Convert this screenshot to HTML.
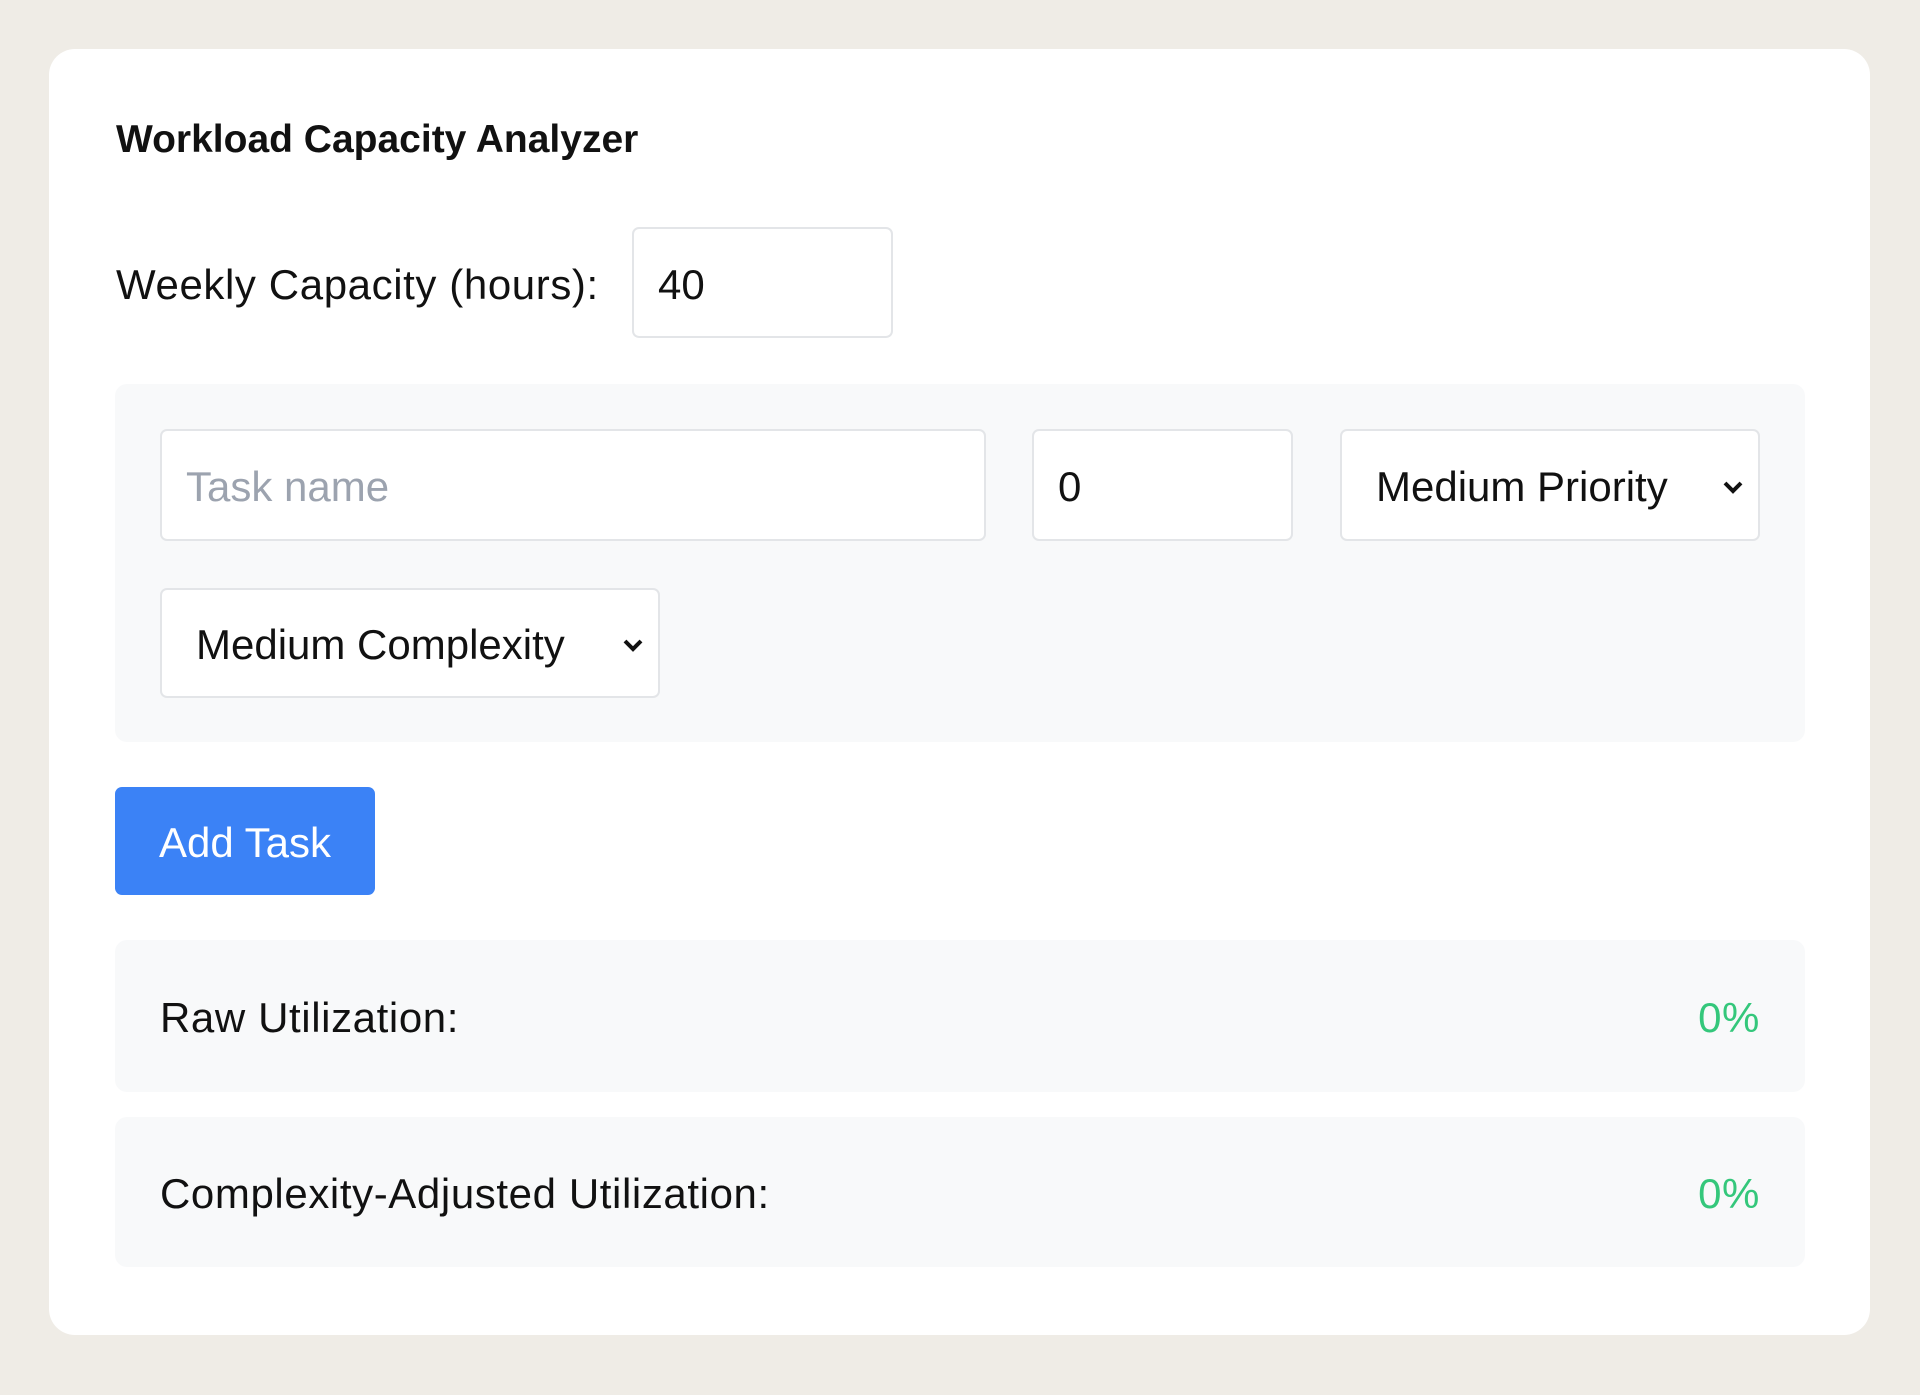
<!DOCTYPE html>
<html><head><meta charset="utf-8"><style>
*{box-sizing:border-box;margin:0;padding:0}
body{width:1920px;height:1395px;background:#efece6;font-family:"Liberation Sans",sans-serif;position:relative;overflow:hidden;color:#111}
.card{position:absolute;left:49px;top:49px;width:1821px;height:1286px;background:#fff;border-radius:26px}
.a{position:absolute}
.t{left:116px;top:115px;font-size:39px;font-weight:bold;line-height:50px;color:#111}
.lbl{left:116px;top:260px;font-size:42px;line-height:50px;letter-spacing:0.6px}
.inp{border:2px solid #e3e5e8;border-radius:7px;background:#fff;font-size:42px;display:flex;align-items:center;padding-left:24px;padding-top:4px}
.panel{background:#f8f9fa;border-radius:12px}
.sel{justify-content:space-between;padding-right:14px;padding-left:34px}
.chev{width:22px;height:14px}
.btn{left:115px;top:787px;width:260px;height:108px;background:#3b82f6;border-radius:7px;color:#fff;font-size:42px;display:flex;align-items:center;justify-content:center;padding-top:4px}
.row{display:flex;align-items:center;justify-content:space-between;padding:4px 45px 0;font-size:42px;letter-spacing:0.6px}
.g{color:#34c77b}
</style></head><body>
<div class="card"></div>
<div class="a t">Workload Capacity Analyzer</div>
<div class="a lbl">Weekly Capacity (hours):</div>
<div class="a inp" style="left:632px;top:227px;width:261px;height:111px">40</div>
<div class="a panel" style="left:115px;top:384px;width:1690px;height:358px"></div>
<div class="a inp" style="left:160px;top:429px;width:826px;height:112px;color:#9ca3af">Task name</div>
<div class="a inp" style="left:1032px;top:429px;width:261px;height:112px">0</div>
<div class="a inp sel" style="left:1340px;top:429px;width:420px;height:112px"><span>Medium Priority</span><svg class="chev" viewBox="0 0 22 14"><path d="M3 3l8 8 8-8" stroke="#111" stroke-width="4" fill="none"/></svg></div>
<div class="a inp sel" style="left:160px;top:588px;width:500px;height:110px"><span>Medium Complexity</span><svg class="chev" viewBox="0 0 22 14"><path d="M3 3l8 8 8-8" stroke="#111" stroke-width="4" fill="none"/></svg></div>
<div class="a btn">Add Task</div>
<div class="a panel row" style="left:115px;top:940px;width:1690px;height:152px"><span>Raw Utilization:</span><span class="g">0%</span></div>
<div class="a panel row" style="left:115px;top:1117px;width:1690px;height:150px"><span>Complexity-Adjusted Utilization:</span><span class="g">0%</span></div>
</body></html>
